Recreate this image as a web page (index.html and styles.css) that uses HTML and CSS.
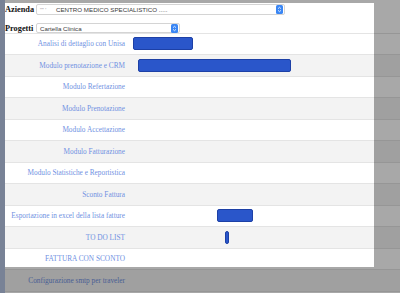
FILE: index.html
```html
<!DOCTYPE html>
<html lang="it">
<head>
    <meta charset="UTF-8">
    <meta name="viewport" content="width=device-width, initial-scale=1.0">
    <title>Progetti - Gantt</title>
    <link rel="stylesheet" href="styles.css">
</head>
<body>

<div class="page">
    <div class="filters">
        <div class="filter-row">
            <span class="filter-label">Azienda</span>
            <div class="select select-wide">
                <span class="select-code">'''' '</span>
                <span class="select-text">CENTRO MEDICO SPECIALISTICO .....</span>
                <svg class="stepper" width="7" height="9" viewBox="0 0 7 9"><rect width="7" height="9" rx="1.6" fill="#3a86f4"/><path d="M2 3.7 L3.5 2.3 L5 3.7 M2 5.3 L3.5 6.7 L5 5.3" stroke="#fff" stroke-width="0.8" fill="none"/></svg>
            </div>
        </div>
        <div class="filter-row">
            <span class="filter-label">Progetti</span>
            <div class="select select-narrow">
                <span class="select-text">Cartella Clinica</span>
                <svg class="stepper" width="7" height="9" viewBox="0 0 7 9"><rect width="7" height="9" rx="1.6" fill="#3a86f4"/><path d="M2 3.7 L3.5 2.3 L5 3.7 M2 5.3 L3.5 6.7 L5 5.3" stroke="#fff" stroke-width="0.8" fill="none"/></svg>
            </div>
        </div>
    </div>

    <div class="gantt">
        <div class="gantt-row">
            <div class="task-name">Analisi di dettaglio con Unisa</div>
            <div class="timeline"><div class="bar" style="margin-left: 3px; width: 60px;"></div></div>
        </div>
        <div class="gantt-row">
            <div class="task-name">Modulo prenotazione e CRM</div>
            <div class="timeline"><div class="bar" style="margin-left: 8px; width: 153px;"></div></div>
        </div>
        <div class="gantt-row">
            <div class="task-name">Modulo Refertazione</div>
            <div class="timeline"></div>
        </div>
        <div class="gantt-row">
            <div class="task-name">Modulo Prenotazione</div>
            <div class="timeline"></div>
        </div>
        <div class="gantt-row">
            <div class="task-name">Modulo Accettazione</div>
            <div class="timeline"></div>
        </div>
        <div class="gantt-row">
            <div class="task-name">Modulo Fatturazione</div>
            <div class="timeline"></div>
        </div>
        <div class="gantt-row">
            <div class="task-name">Modulo Statistiche e Reportistica</div>
            <div class="timeline"></div>
        </div>
        <div class="gantt-row">
            <div class="task-name">Sconto Fattura</div>
            <div class="timeline"></div>
        </div>
        <div class="gantt-row">
            <div class="task-name">Esportazione in excel della lista fatture</div>
            <div class="timeline"><div class="bar" style="margin-left: 87px; width: 36px;"></div></div>
        </div>
        <div class="gantt-row">
            <div class="task-name">TO DO LIST</div>
            <div class="timeline"><div class="bar" style="margin-left: 95px; width: 4px;"></div></div>
        </div>
        <div class="gantt-row">
            <div class="task-name">FATTURA CON SCONTO</div>
            <div class="timeline"></div>
        </div>
        <div class="gantt-row">
            <div class="task-name">Configurazione smtp per traveler</div>
            <div class="timeline"></div>
        </div>
        <div class="gantt-row">
            <div class="task-name"></div>
            <div class="timeline"></div>
        </div>
    </div>
</div>

<!-- dimmed overlay around the visible area -->
<div class="spotlight"></div>

</body>
</html>
```

FILE: styles.css
```css
body {
    margin: 0;
    padding: 0;
    background-color: #fff;
    overflow: hidden;
    font-family: "Liberation Serif", "Times New Roman", serif;
}
.page {
    border-left: 5px solid #b6c5e4;
    height: 293px;
    overflow: hidden;
}
.filters {
    height: 32.5px;
    box-sizing: border-box;
    padding-top: 4px;
    display: flex;
    flex-direction: column;
    gap: 8px;
}
.filter-row {
    display: flex;
    align-items: center;
}
.filter-label {
    width: 31px;
    font-size: 8.3px;
    font-weight: bold;
    color: #111;
}
.select {
    display: flex;
    align-items: center;
    box-sizing: border-box;
    background-color: #fff;
    border: 1px solid #d4d4d4;
    border-radius: 2px;
    padding: 0 1px 0 3px;
    font-family: "Liberation Sans", Arial, sans-serif;
    color: #3a3a3a;
}
.select-wide {
    width: 249px;
    height: 11px;
}
.select-narrow {
    width: 144px;
    height: 10px;
}
.select-code {
    font-size: 5px;
    color: #9a9a9a;
    width: 16px;
}
.select-text {
    font-size: 6.2px;
    flex: 1;
    white-space: nowrap;
}
.stepper {
    display: block;
}
.gantt-row {
    display: grid;
    grid-template-columns: 125px 1fr;
    height: 21.5px;
    box-sizing: border-box;
    border-top: 1px solid #e4e4e4;
    background-color: #fff;
}
.gantt-row:nth-child(even) {
    background-color: #f3f3f3;
}
.task-name {
    display: flex;
    align-items: center;
    justify-content: flex-end;
    padding-right: 5px;
    font-size: 7.3px;
    color: #7091e2;
    white-space: nowrap;
}
.timeline {
    display: flex;
    align-items: center;
}
.bar {
    height: 13px;
    box-sizing: border-box;
    background-color: #2a56ca;
    border: 1px solid #1d40a6;
    border-radius: 2px;
}
.spotlight {
    position: absolute;
    left: 5px;
    top: 3px;
    width: 369px;
    height: 264px;
    box-shadow: 0 0 0 600px rgba(0, 0, 0, 0.34);
    pointer-events: none;
}
```
